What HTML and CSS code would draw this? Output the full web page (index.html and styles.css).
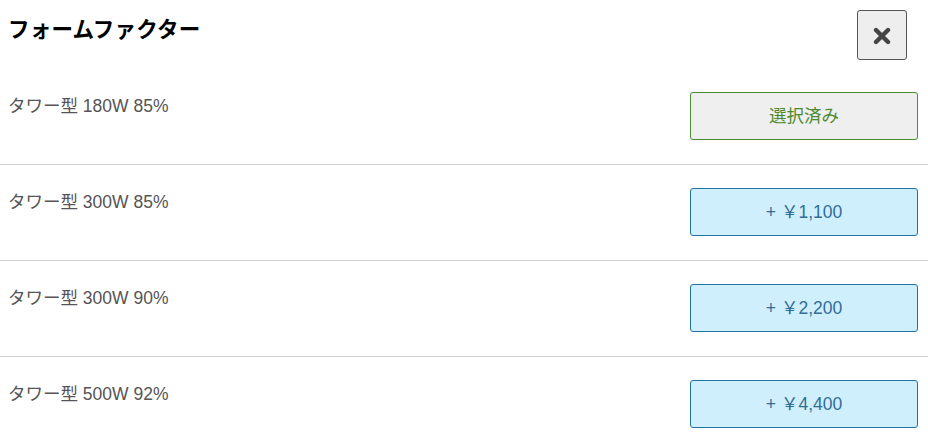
FILE: index.html
```html
<!DOCTYPE html>
<html lang="ja">
<head>
<meta charset="utf-8">
<title>フォームファクター</title>
<link rel="stylesheet" href="styles.css">
</head>
<body>
<div class="modal">
  <div class="header">
    <h1 class="title">フォームファクター</h1>
    <button class="close" type="button" aria-label="閉じる">
      <svg width="18" height="18" viewBox="0 0 18 18" aria-hidden="true">
        <path d="M3 3 L15 15 M15 3 L3 15" stroke="#444" stroke-width="4.4" stroke-linecap="round" fill="none"/>
      </svg>
    </button>
  </div>
  <ul class="options">
    <li class="row">
      <span class="label">タワー型 180W 85%</span>
      <button class="btn btn-selected" type="button">選択済み</button>
    </li>
    <li class="row">
      <span class="label">タワー型 300W 85%</span>
      <button class="btn btn-add" type="button">+ ￥1,100</button>
    </li>
    <li class="row">
      <span class="label">タワー型 300W 90%</span>
      <button class="btn btn-add" type="button">+ ￥2,200</button>
    </li>
    <li class="row">
      <span class="label">タワー型 500W 92%</span>
      <button class="btn btn-add" type="button">+ ￥4,400</button>
    </li>
  </ul>
</div>
</body>
</html>
```

FILE: styles.css
```css
* {
  box-sizing: border-box;
}

html, body {
  margin: 0;
  padding: 0;
  background: #ffffff;
}

body {
  font-family: "Liberation Sans", "Noto Sans CJK JP", Arial, sans-serif;
  color: #555555;
}

.modal {
  width: 928px;
}

.header {
  display: flex;
  justify-content: space-between;
  align-items: flex-start;
  padding: 10px 21px 9px 8px;
}

.title {
  margin: 0;
  font-family: "Noto Sans CJK JP", sans-serif;
  font-size: 21.5px;
  font-weight: 700;
  line-height: 36px;
  color: #000000;
  letter-spacing: 0.2px;
}

.close {
  width: 50px;
  height: 50px;
  padding: 0;
  margin: 0;
  border: 1px solid #555555;
  border-radius: 3px;
  background: #eeeeee;
  display: flex;
  align-items: center;
  justify-content: center;
  cursor: pointer;
}

.close svg {
  display: block;
  margin-top: 1px;
}

.options {
  list-style: none;
  margin: 0;
  padding: 0;
}

.row {
  display: flex;
  justify-content: space-between;
  align-items: flex-start;
  padding: 23px 10px 24px 8px;
  border-bottom: 1px solid #d0d0d0;
}

.row:last-child {
  border-bottom: none;
}

.label {
  font-size: 17.5px;
  line-height: 28px;
  color: #555555;
}

.btn {
  width: 228px;
  height: 48px;
  margin: 0;
  padding: 0;
  border-radius: 3px;
  font-family: "Liberation Sans", "Noto Sans CJK JP", Arial, sans-serif;
  font-size: 17.5px;
  line-height: 46px;
  text-align: center;
  cursor: pointer;
}

.btn-selected {
  background: #efefef;
  border: 1px solid #4a8b2c;
  color: #4d8a2f;
}

.btn-add {
  background: #cfeffd;
  border: 1px solid #1f72a3;
  color: #2f6e96;
}
```
